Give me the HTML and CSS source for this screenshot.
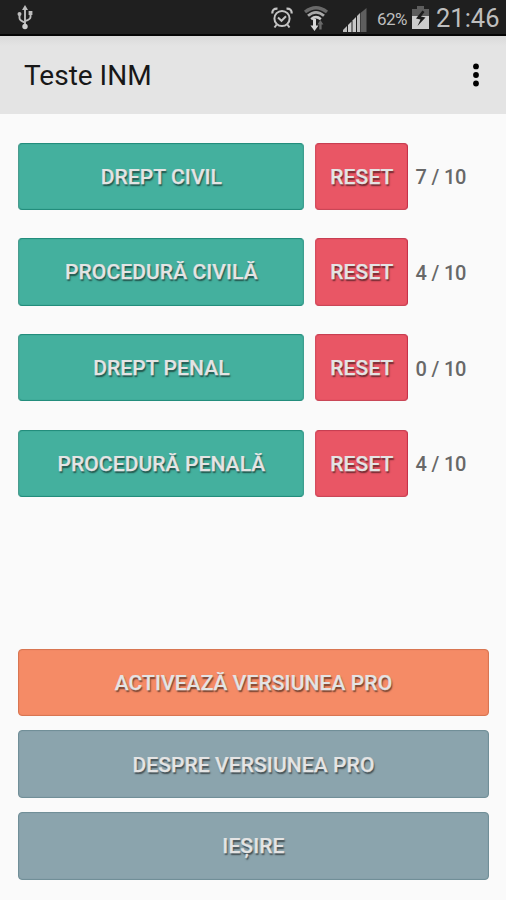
FILE: index.html
```html
<!DOCTYPE html>
<html lang="ro">
<head>
<meta charset="utf-8">
<title>Teste INM</title>
<link rel="stylesheet" href="styles.css">
</head>
<body>
<div class="screen">
  <div class="status">
    <svg class="usb" width="16" height="26" viewBox="0 0 16 26" fill="none" stroke="#bdbdbd" stroke-width="1.9">
      <path d="M8 4v18M2.500 9v4q0 2.500 5.500 4.500M13.500 8v4q0 2.500-5.500 4"/>
      <path d="M8 0l3 5H5z" fill="#bdbdbd" stroke="none"/>
      <circle cx="8" cy="21.500" r="2.700" fill="#cfcfcf" stroke="none"/>
      <circle cx="2.500" cy="9" r="2" fill="#bdbdbd" stroke="none"/>
      <path d="M11.600 6h3.800v4h-3.800z" fill="#bdbdbd" stroke="none"/>
    </svg>
    <div class="tray">
      <svg class="alarm" width="22" height="22" viewBox="0 0 22 22" fill="none" stroke="#c4c4c4" stroke-width="2">
        <circle cx="11" cy="11.500" r="7.600"/>
        <path d="M7 10.500l3.500 3.300 4.500-4.500M5.700 17.500l-2.200 3M16.300 17.500l2.200 3"/>
        <path d="M1.300 6.500Q1 1.500 6.500 1.700M20.700 6.500Q21 1.500 15.500 1.700" stroke-width="2.200"/>
      </svg>
      <svg class="wifi" width="26" height="26" viewBox="0 0 26 26" fill="none">
        <path d="M2 6Q13-2.500 24 6" stroke="#696969" stroke-width="3.400"/>
        <path d="M5 9.800Q13 3 21 9.800" stroke="#aaa" stroke-width="2.800"/>
        <path d="M8.200 13.200Q13 9.200 17.800 13.200" stroke="#ccc" stroke-width="2.700"/>
        <path d="M10 13h3v6.500h2.500l-4 5.500-4-5.500H10z" fill="#d8d8d8"/>
        <path d="M16.200 23.500v-5h-1.800l3-4.500 3 4.500h-1.800v5z" fill="#696969"/>
      </svg>
      <svg class="signal" width="24" height="24" viewBox="0 0 24 24">
        <path d="M0 24v-2l4-4v6z" fill="#bdbdbd"/>
        <path d="M5 24V17l3.500-3.500V24z" fill="#ccc"/>
        <path d="M9.500 24V12.500L13 9V24z" fill="#c8c8c8"/>
        <path d="M14 24V8l3-3v19z" fill="#bdbdbd"/>
        <path d="M17.500 24V5l6-5v24z" fill="#5e5e5e"/>
      </svg>
      <span class="percent">62%</span>
      <svg class="battery" width="17" height="23" viewBox="0 0 17 23">
        <path d="M5 0h7v3h5v9H0V3h5z" fill="#5d5d5d"/>
        <path d="M0 10h17v13H0z" fill="#cdcdcd"/>
        <path d="M10.500 4.500L4 12.500l4.500 1L5.500 20l8-8.500-4.500-1 3.500-4.500z" fill="#1c1c1c"/>
      </svg>
      <span class="clock">21:46</span>
    </div>
  </div>
  <header class="appbar">
    <h1>Teste INM</h1>
    <svg width="6" height="24" viewBox="0 0 6 24"><circle cx="3" cy="3.400" r="2.900"/><circle cx="3" cy="12" r="2.900"/><circle cx="3" cy="20.500" r="2.900"/></svg>
  </header>
  <main>
    <div class="tests">
      <div class="row"><button class="btn green">DREPT CIVIL</button><button class="btn red">RESET</button><span class="score">7 / 10</span></div>
      <div class="row"><button class="btn green">PROCEDURĂ CIVILĂ</button><button class="btn red">RESET</button><span class="score">4 / 10</span></div>
      <div class="row"><button class="btn green">DREPT PENAL</button><button class="btn red">RESET</button><span class="score">0 / 10</span></div>
      <div class="row"><button class="btn green">PROCEDURĂ PENALĂ</button><button class="btn red">RESET</button><span class="score">4 / 10</span></div>
    </div>
    <div class="actions">
      <button class="btn orange">ACTIVEAZĂ VERSIUNEA PRO</button>
      <button class="btn slate">DESPRE VERSIUNEA PRO</button>
      <button class="btn slate">IEȘIRE</button>
    </div>
  </main>
</div>
</body>
</html>
```
FILE: styles.css
```css
* { box-sizing: border-box; }
body { margin: 0; font-family: Roboto, "Liberation Sans", sans-serif; background: #fafafa; }
.screen { width: 506px; height: 900px; display: flex; flex-direction: column; background: #fafafa; }
.status {
  height: 36px; flex: none; display: flex; justify-content: space-between;
  padding: 0 7px 0 17px; background: #1f1f1f; border-bottom: 2px solid #050505; color: #bebebe;
}
.usb { margin-top: 5px; }
.tray { display: flex; align-items: flex-start; }
.alarm { margin: 7px -1px 0 0; }
.wifi { margin: 6px 0 0 11px; }
.signal { margin: 8px 0 0 14px; }
.percent { font-size: 17px; line-height: 20px; margin: 9px 0 0 10px; width: 30px; letter-spacing: -0.6px; }
.battery { margin: 6px 0 0 5px; }
.clock { font-size: 25.500px; line-height: 30px; margin: 3px 0 0 7px; width: 63px; white-space: nowrap; letter-spacing: 0; }
.appbar {
  height: 78px; flex: none; display: flex; align-items: center; justify-content: space-between;
  padding: 0 27px 0 24px; background: linear-gradient(#dadada, #e4e4e4 10px);
}
.appbar h1 { margin: 0; padding-top: 2px; font-size: 28px; font-weight: 400; line-height: 34px; color: #181818; }
main { flex: 1; display: flex; flex-direction: column; justify-content: space-between; padding: 28.500px 17.500px 20.500px 18.400px; }
.tests { display: grid; gap: 28.200px; }
.row { display: grid; grid-template-columns: 286px 93px 1fr; column-gap: 11px; align-items: center; }
.btn {
  height: 67.500px; padding: 1px 0 0; border: 1px solid; border-radius: 4px;
  font: 500 21px/26px Roboto, sans-serif; letter-spacing: .1px; color: #e4e4e4;
  -webkit-text-stroke: .25px #e4e4e4; text-shadow: 1px 1.500px 1.500px rgba(0, 0, 0, .55);
}
.green { background: #44b09e; border-color: #238d7c #3d9e8f #238d7c #4b9b8e; box-shadow: inset 0 0 1px #238d7c; }
.red { background: #e95665; border-color: #c73f52 #c53249 #c94757 #d34d5e; box-shadow: inset 0 0 1px #c53249; }
.orange { background: #f58b66; border-color: #d87652; box-shadow: inset 0 0 1px #d87652; }
.slate { background: #8ba4ad; border-color: #718f98; box-shadow: inset 0 0 1px #718f98; }
.score { margin-left: -4px; padding-top: 2px; font-size: 20px; font-weight: 500; letter-spacing: -.15px; color: #686868; }
.actions { display: grid; gap: 14.200px; }
```
